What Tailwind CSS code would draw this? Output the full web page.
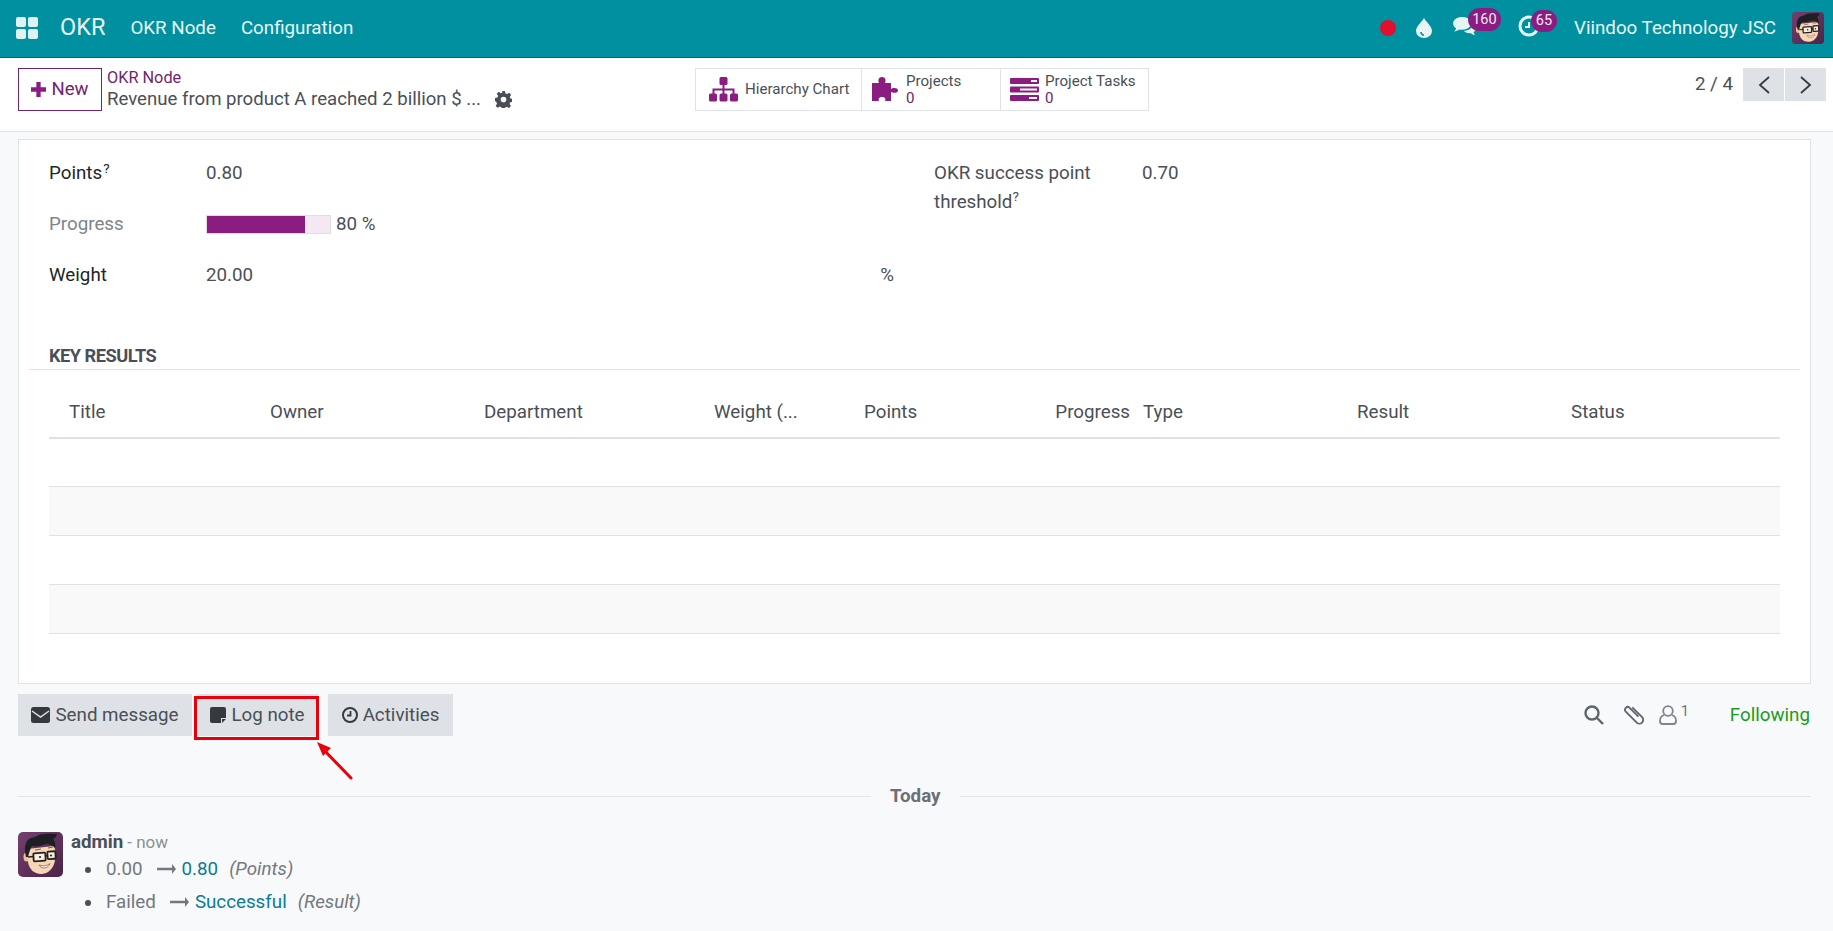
<!DOCTYPE html>
<html lang="en">
<head>
<meta charset="UTF-8">
<title>OKR Node</title>
<script src="https://cdn.jsdelivr.net/npm/@tailwindcss/browser@4"></script>
</head>
<body class="relative h-[931px] w-[1833px] overflow-hidden bg-[#f8f9fb] font-['Roboto',sans-serif] text-[18.75px] text-[#4a4f57]">

<!-- avatar symbol, reused in navbar and chatter -->
<svg class="absolute h-0 w-0">
  <defs><linearGradient id="avbg" x1="0" y1="0" x2="1" y2="1"><stop offset="0" stop-color="#74406e"/><stop offset="1" stop-color="#4c2348"/></linearGradient></defs>
  <symbol id="avatar" viewBox="0 0 45 45">
    <rect width="45" height="45" rx="5" fill="url(#avbg)"/>
    <ellipse cx="8.500" cy="25" rx="3" ry="4.500" fill="#edbd94"/>
    <path d="M9 17l27-3c2 5 2 12 0 18-2 6-7 10-13 10-7 0-12-5-13-12z" fill="#f7d6b6"/>
    <path d="M8 25C5 13 8 6 17 5c3-3 12-4 22-3 0 2-2 4-4 5 2 2 3 5 2 9-3-3-6-4-9-4-5 2-10 3-14 2-2 3-3 7-4 11z" fill="#1d1f24"/>
    <path d="M17 18l6-1M30 16l5-1" stroke="#8a5a3c" stroke-width="1"/>
    <rect x="15.500" y="21" width="12" height="8" rx="1" fill="#fbeee0" stroke="#222" stroke-width="1.800" transform="rotate(-4 21 25)"/>
    <rect x="29.500" y="19.500" width="8" height="7.500" rx="1" fill="#fbeee0" stroke="#222" stroke-width="1.800" transform="rotate(-4 33 23)"/>
    <path d="M10 25l6-.5M27 24l3-.5" stroke="#222" stroke-width="1.500"/>
    <circle cx="22" cy="25" r="1.100" fill="#222"/><circle cx="33" cy="23.500" r="1.100" fill="#222"/>
    <path d="M21 33c4 1.500 8 1 11-1.500-1 5-9 6-11 1.500z" fill="#fff" stroke="#a9593f" stroke-width=".8"/>
  </symbol>
</svg>

<!-- Navbar -->
<header class="flex h-[58px] items-center border-b border-[#00666f] bg-[#00909f] pb-[1px] text-[#e6f6f7]">
  <svg class="ml-[16px] h-[22px] w-[22px]" viewBox="0 0 22 22" fill="#dff3f4">
    <rect x="0" y="0" width="10" height="10" rx="2"/><rect x="12" y="0" width="10" height="10" rx="2"/>
    <rect x="0" y="12" width="10" height="10" rx="2"/><rect x="12" y="12" width="10" height="10" rx="2"/>
  </svg>
  <span class="ml-[22px] text-[23.500px]">OKR</span>
  <span class="ml-[25px] text-[18.750px]">OKR Node</span>
  <span class="ml-[25px] text-[18.750px]">Configuration</span>

  <div class="ml-auto flex items-center">
    <span class="h-[16px] w-[16px] rounded-full bg-[#e0102f]"></span>
    <svg class="ml-[20px] h-[20px] w-[16px]" viewBox="0 0 16 20"><path d="M8 0c2 4 8 8 8 13a8 7 0 0 1-16 0C0 8 6 4 8 0z" fill="#e6f6f7"/><path d="M5 14c0 2 1 3 3 3" stroke="#00909f" stroke-width="1.500" fill="none"/></svg>
    <div class="relative ml-[20px] h-[24px] w-[49px]">
      <svg class="absolute left-0 top-[1px] h-[20px] w-[25px]" viewBox="0 0 25 22" fill="#e6f6f7">
        <path d="M10 0c5.500 0 10 3 10 7s-4.500 7-10 7c-1 0-2 0-3-.3C5 15 3 15.500 1 16c1-1 2-2 2.300-3.500C1.200 11.500 0 9.500 0 7c0-4 4.500-7 10-7z"/>
        <path d="M21.500 8c2 1 3.500 2.500 3.500 4.500 0 1.800-1 3.200-2.500 4 .2 1.500 1 2.500 2 3.500-2-.3-4-1-5.300-2.300-3 .5-6-.5-7.500-2.500 5 .2 9.500-2.500 9.800-7.200z"/>
      </svg>
      <span class="absolute left-[16px] top-[-8px] flex h-[23px] w-[33px] items-center justify-center rounded-full bg-[#8a1c82] text-[14.500px] text-[#f3e6f2]">160</span>
    </div>
    <div class="relative ml-[17px] h-[24px] w-[39px]">
      <svg class="absolute left-0 top-[-1px] h-[22px] w-[22px]" viewBox="0 0 22 22" fill="none" stroke="#e6f6f7" stroke-width="3"><circle cx="11" cy="11" r="9"/><path d="M11 7v5H7" stroke-width="2"/></svg>
      <span class="absolute left-[13px] top-[-6px] flex h-[22px] w-[26px] items-center justify-center rounded-full bg-[#8a1c82] text-[14.500px] text-[#f3e6f2]">65</span>
    </div>
    <span class="ml-[17px]">Viindoo Technology JSC</span>
    <svg class="ml-[16px] mr-[9px] h-[32px] w-[32px]"><use href="#avatar"/></svg>
  </div>
</header>

<!-- Control panel -->
<section class="relative flex h-[74px] items-start border-b border-[#dfe2e6] bg-white pt-[10px]">
  <button class="ml-[18px] flex h-[43px] w-[84px] items-center justify-center gap-[5px] border border-[#71246f] text-[18.600px] text-[#71246f]">
    <svg class="h-[15px] w-[15px]" viewBox="0 0 14 14" fill="#8a1c82"><path d="M5 0h4v5h5v4H9v5H5V9H0V5h5z"/></svg>New
  </button>
  <div class="ml-[5px] w-[440px]">
    <div class="text-[16.300px] leading-[20px] text-[#71246f]">OKR Node</div>
    <div class="flex items-center text-[18.600px] leading-[23px]">Revenue from product A reached 2 billion $ ...
      <svg class="ml-[14px] h-[17px] w-[17px]" viewBox="0 0 24 24" fill="#4a4f57"><path fill-rule="evenodd" d="M10 0h4l.7 3.400 2.300 1 3-1.900 2.800 2.800-1.900 3 1 2.300 3.100.700v4l-3.400.7-1 2.300 1.900 3-2.800 2.800-3-1.900-2.300 1-.7 3.100h-4l-.7-3.400-2.300-1-3 1.900-2.800-2.800 1.900-3-1-2.300L0 14v-4l3.400-.7 1-2.300-1.900-3 2.800-2.800 3 1.900 2.300-1zM12 8a4 4 0 1 0 0 8 4 4 0 0 0 0-8z"/></svg>
    </div>
  </div>

  <div class="absolute left-[695px] top-[10px] flex h-[43px] w-[454px] border border-[#dfe2e6] bg-white text-[15.100px]">
    <div class="flex w-[166px] items-center border-r border-[#dfe2e6] pl-[13px]">
      <svg class="h-[25px] w-[29px]" viewBox="0 0 29 25" fill="#8a1c82">
        <rect x="10.500" y="0" width="8" height="8" rx="1.500"/><path d="M13.500 8h2v3.500h10V17h-2v-3.500h-8V17h-2v-3.500h-8V17h-2v-5.500h10z"/>
        <rect x="0" y="16.500" width="8" height="8" rx="1.500"/><rect x="10.500" y="16.500" width="8" height="8" rx="1.500"/><rect x="21" y="16.500" width="8" height="8" rx="1.500"/>
      </svg>
      <span class="ml-[7px]">Hierarchy Chart</span>
    </div>
    <div class="flex w-[139px] items-center border-r border-[#dfe2e6] pl-[10px]">
      <svg class="h-[25px] w-[27px]" viewBox="0 0 27 25" fill="#8a1c82"><path d="M0 6h7C6 4 6 0 10 0s4 4 3 6h6v6c2-1.500 7-1.500 7 1.500S21 16 19 15v9h-6c1-2 0-4-3-4s-4 2-3 4H0z"/></svg>
      <div class="ml-[7px] leading-[17px]"><div>Projects</div><div class="text-[#71246f]">0</div></div>
    </div>
    <div class="flex flex-1 items-center pl-[9px]">
      <svg class="h-[23px] w-[29px]" viewBox="0 0 29 23">
        <rect width="29" height="6" rx="1" fill="#8a1c82"/><rect y="8.500" width="29" height="6" rx="1" fill="#8a1c82"/><rect y="17" width="29" height="6" rx="1" fill="#8a1c82"/>
        <rect x="21" y="2" width="6" height="2" fill="#fff"/><rect x="10" y="10.500" width="17" height="2" fill="#fff"/><rect x="19" y="19" width="8" height="2" fill="#fff"/>
      </svg>
      <div class="ml-[6px] leading-[17px]"><div>Project Tasks</div><div class="text-[#71246f]">0</div></div>
    </div>
  </div>

  <div class="ml-auto mr-[7px] flex items-center">
    <span class="mr-[10px]">2 / 4</span>
    <button class="flex h-[33px] w-[41px] items-center justify-center bg-[#dee2e6]"><svg class="h-[18px] w-[12px]" viewBox="0 0 12 18" fill="none" stroke="#343a40" stroke-width="1.800"><path d="M11 1 2 9l9 8"/></svg></button>
    <button class="ml-[1px] flex h-[33px] w-[41px] items-center justify-center bg-[#dee2e6]"><svg class="h-[18px] w-[12px]" viewBox="0 0 12 18" fill="none" stroke="#343a40" stroke-width="1.800"><path d="m1 1 9 8-9 8"/></svg></button>
  </div>
</section>

<!-- Form sheet -->
<main class="ml-[18px] mr-[22px] mt-[7px] h-[545px] border border-[#dfe2e6] bg-white">
  <div class="flex pt-[8px]">
    <div class="ml-[30px] w-[885px]">
      <div class="flex h-[51px] items-center">
        <span class="w-[157px] text-[#212529]">Points<sup class="ml-[1px] text-[13.500px]">?</sup></span><span>0.80</span>
      </div>
      <div class="flex h-[51px] items-center">
        <span class="w-[157px] text-[#808489]">Progress</span>
        <div class="h-[19px] w-[125px] border border-[#e9d8e8] bg-[#f4e9f3]"><div class="h-full bg-[#8a1c82]" style="width:80%"></div></div>
        <span class="ml-[5px]">80 %</span>
      </div>
      <div class="flex h-[51px] items-center">
        <span class="w-[157px] text-[#212529]">Weight</span><span>20.00</span>
        <span class="ml-auto mr-[40px]">%</span>
      </div>
    </div>
    <div class="flex pt-[11px]">
      <div class="w-[208px] leading-[29px]">OKR success point threshold<sup class="text-[13.500px]">?</sup></div>
      <span class="leading-[29px]">0.70</span>
    </div>
  </div>

  <div class="ml-[10px] mr-[10px] mt-[44px] border-b border-[#dfe2e6] pb-[2px] pl-[20px] text-[18.200px] font-bold leading-[22px] tracking-[-0.5px]">KEY RESULTS</div>

  <table class="ml-[30px] mt-[16px] w-[1731px] table-fixed border-collapse">
    <thead>
      <tr class="h-[52px] border-b-2 border-[#dee2e6] text-left">
        <th class="w-[201px] pl-[20px] pt-[2px] font-normal">Title</th>
        <th class="w-[214px] pl-[20px] pt-[2px] font-normal">Owner</th>
        <th class="w-[230px] pl-[20px] pt-[2px] font-normal">Department</th>
        <th class="w-[150px] pl-[20px] pt-[2px] font-normal">Weight (...</th>
        <th class="w-[150px] pl-[20px] pt-[2px] font-normal">Points</th>
        <th class="w-[139px] pr-[3px] pt-[2px] text-right font-normal">Progress</th>
        <th class="w-[214px] pl-[10px] pt-[2px] font-normal">Type</th>
        <th class="w-[214px] pl-[10px] pt-[2px] font-normal">Result</th>
        <th class="pl-[10px] pt-[2px] font-normal">Status</th>
      </tr>
    </thead>
    <tbody>
      <tr class="h-[48px] border-b border-[#dee2e6]"><td colspan="9"></td></tr>
      <tr class="h-[49px] border-b border-[#dee2e6] bg-[#f9f9f9]"><td colspan="9"></td></tr>
      <tr class="h-[49px] border-b border-[#dee2e6]"><td colspan="9"></td></tr>
      <tr class="h-[49px] border-b border-[#dee2e6] bg-[#f9f9f9]"><td colspan="9"></td></tr>
    </tbody>
  </table>
</main>

<!-- Chatter -->
<section class="ml-[18px] mr-[22px] mt-[10px] flex h-[42px] items-center">
  <button class="flex h-[42px] w-[174px] items-center justify-center gap-[5px] bg-[#dee2e6]">
    <svg class="h-[16px] w-[19px]" viewBox="0 0 19 16"><rect width="19" height="16" rx="2.500" fill="#343a40"/><path d="m1 4 8.500 6L18 4" fill="none" stroke="#dee2e6" stroke-width="1.500"/></svg>Send message
  </button>
  <button class="ml-[5px] flex h-[42px] w-[121px] items-center justify-center gap-[5px] bg-[#dee2e6]">
    <svg class="h-[16px] w-[16px]" viewBox="0 0 16 16"><path d="M2 0h12a2 2 0 0 1 2 2v9h-5v5H2a2 2 0 0 1-2-2V2a2 2 0 0 1 2-2z" fill="#343a40"/><path d="M12 12h4l-4 4z" fill="#343a40"/></svg>Log note
  </button>
  <button class="ml-[10px] flex h-[42px] w-[125px] items-center justify-center gap-[5px] bg-[#dee2e6]">
    <svg class="h-[16px] w-[16px]" viewBox="0 0 16 16" fill="none" stroke="#343a40" stroke-width="2"><circle cx="8" cy="8" r="7"/><path d="M8.500 4v4.500H5" stroke-width="1.800"/></svg>Activities
  </button>
  <div class="ml-auto flex items-center text-[#6c7178]">
    <svg class="h-[20px] w-[20px]" viewBox="0 0 20 20" fill="none" stroke="#5f656d" stroke-width="2.400"><circle cx="8" cy="8" r="6.500"/><path d="m13 13 6 6"/></svg>
    <svg class="ml-[19px] mt-[-2px] h-[22px] w-[22px]" viewBox="0 0 22 22" fill="none" stroke="#5f656d" stroke-width="1.800"><g transform="rotate(-45 11 11)"><path d="M14.500 5v14a3.800 3.800 0 0 1-7.600 0V3.500a2.700 2.700 0 0 1 5.400 0V16"/></g></svg>
    <svg class="ml-[14px] h-[20px] w-[18px]" viewBox="0 0 18 20" fill="none" stroke="#7e848b" stroke-width="1.800"><circle cx="9" cy="6" r="4.800"/><path d="M5 10C2 11 1 13 1 16c0 2 1 3 2.500 3h11c1.500 0 2.500-1 2.500-3 0-3-1-5-4-6"/></svg>
    <span class="ml-[4px] mt-[-9px] text-[14px] leading-none">1</span>
    <span class="ml-[41px] mr-[1px] text-[#1a9c1a]">Following</span>
  </div>
</section>

<!-- Date separator -->
<div class="ml-[18px] mr-[22px] mt-[49px] flex items-center">
  <div class="h-px w-[853px] bg-[#e3e5e8]"></div>
  <span class="px-[19px] font-bold leading-[22px] text-[#6a6f76]">Today</span>
  <div class="h-px flex-1 bg-[#e3e5e8]"></div>
</div>

<!-- Message -->
<article class="mx-[18px] mt-[25px] flex">
  <svg class="h-[45px] w-[45px]"><use href="#avatar"/></svg>
  <div class="ml-[8px]">
    <div class="flex items-baseline leading-[20px]"><span class="font-bold">admin</span><span class="ml-[4px] text-[17px] text-[#8a8f95]">- now</span></div>
    <ul class="mt-[3px] pl-[14px] text-[#73787e]">
      <li class="h-[33px] leading-[28px]"><span class="mr-[15px] inline-block h-[6px] w-[6px] rounded-full bg-[#4a4f57] align-[2px]"></span>0.00<svg class="ml-[14px] mr-[6px] inline h-[10px] w-[19px] align-[1px]" viewBox="0 0 19 10" fill="#73787e"><path d="M0 3.800h15V0l4 5-4 5V6.200H0z"/></svg><span class="text-[#0b7a99]">0.80</span><em class="ml-[11px]">(Points)</em></li>
      <li class="h-[33px] leading-[28px]"><span class="mr-[15px] inline-block h-[6px] w-[6px] rounded-full bg-[#4a4f57] align-[2px]"></span>Failed<svg class="ml-[14px] mr-[6px] inline h-[10px] w-[19px] align-[1px]" viewBox="0 0 19 10" fill="#73787e"><path d="M0 3.800h15V0l4 5-4 5V6.200H0z"/></svg><span class="text-[#0b7a99]">Successful</span><em class="ml-[11px]">(Result)</em></li>
    </ul>
  </div>
</article>

<!-- Annotation over the Log note button -->
<div class="absolute left-[194px] top-[696px] h-[44px] w-[125px] border-[3px] border-[#e8000d]"></div>
<svg class="absolute left-[310px] top-[735px] h-[50px] w-[50px]" viewBox="0 0 50 50">
  <path d="M41 43 12 13" stroke="#e8000d" stroke-width="3" stroke-linecap="round"/>
  <path d="M7 7l14 6-8 8z" fill="#e8000d"/>
</svg>
</body>
</html>
